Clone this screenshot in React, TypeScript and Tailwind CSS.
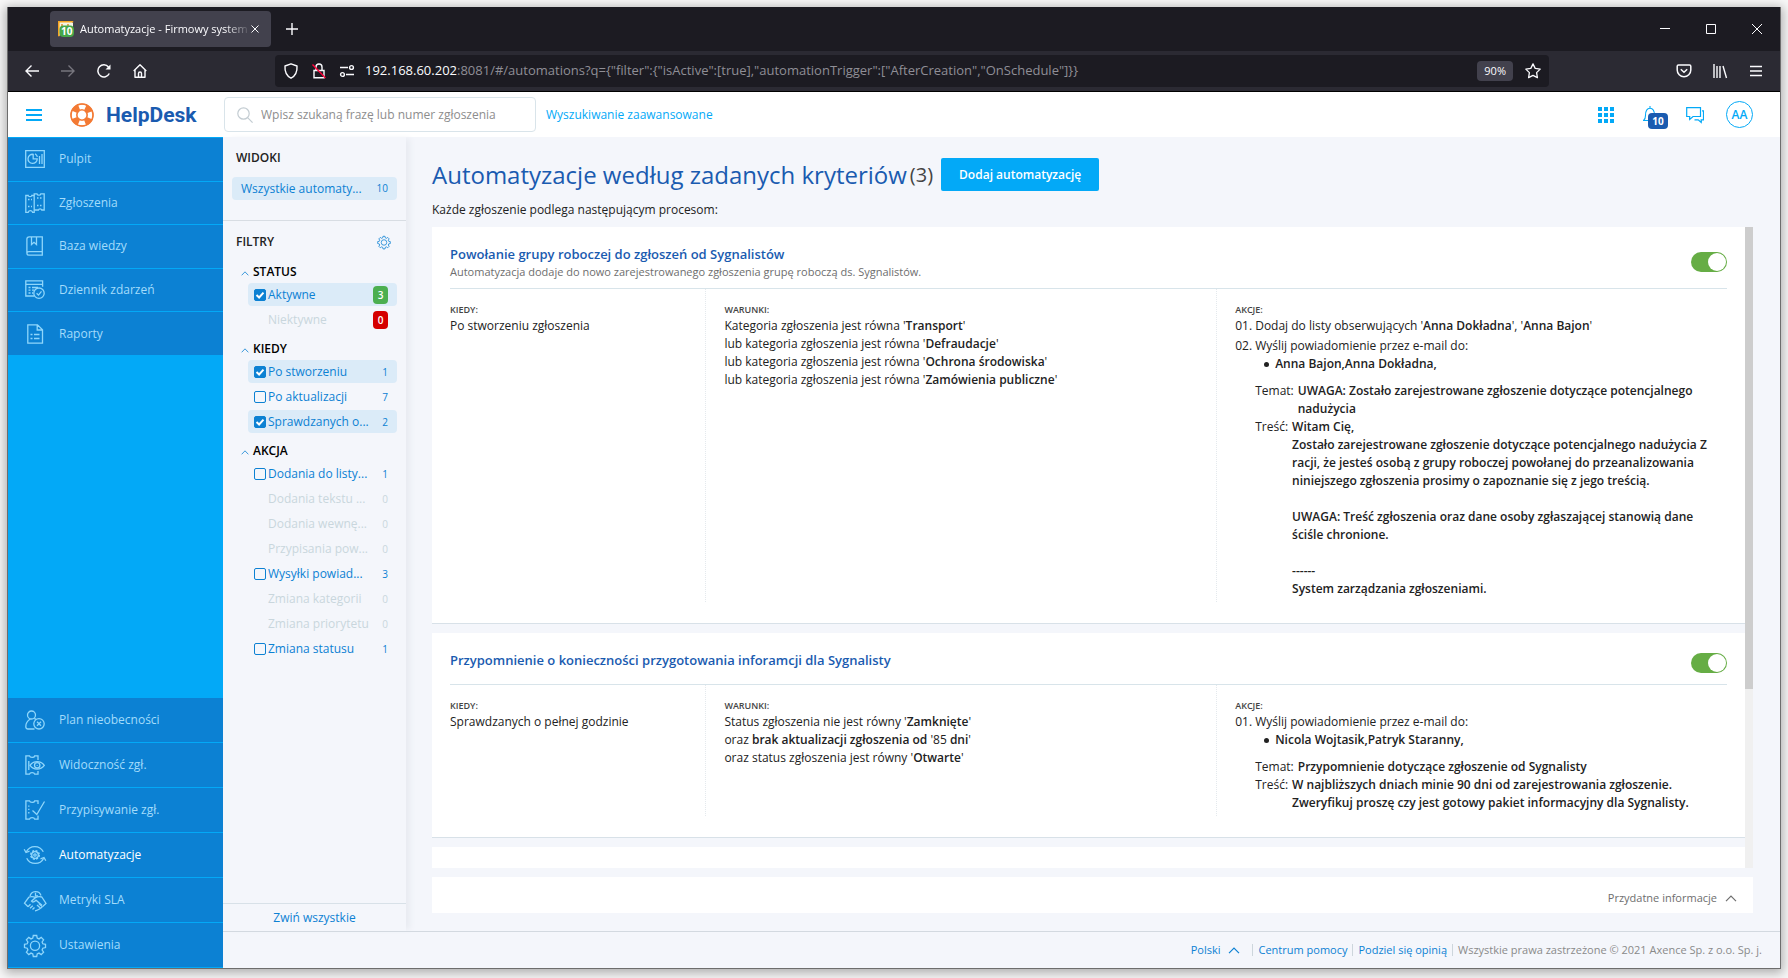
import React from 'react';
import clsx from 'clsx';

/* ---------- icons ---------- */

const iconPaths: Record<string, React.ReactNode> = {
  dashboard: (
    <>
      <path d="M.7 1.7h18.6v16.6H.7z" />
      <path d="M8.2 5.3a4.6 4.6 0 1 0 4 4.6H8.2zM8.2 5v5M10 4.8a4.8 4.8 0 0 1 2.4 3M14.5 7v8M17 5v10" />
    </>
  ),
  tickets: (
    <>
      <path d="M.8 2.5h2.4c.2 1.6 3.4 1.6 3.6 0h2.4v16.8H7.600c-.8-2.200-3.600-2.200-4.400 0H.8V2.500z" />
      <path d="M9.2 2.500V.8H12c.4 1.8 3.400 1.800 3.800 0h3.400V17h-2.400c-.4-1.600-3-1.600-3.400 0H9.200" />
      <path d="M3 6.500h4M3 13.500h4M12 5h4.500M12 12.500h4.500" strokeDasharray="1.500 1.500" />
    </>
  ),
  book: (
    <>
      <path d="M17.300 15.600V.8H4.200C2.600.8 1.900 1.800 1.900 3v14c0 1.400.9 2.200 2.100 2.200h13.300v-2.100M17.300 15.600H4c-1.200 0-2.100.6-2.100 1.500M17.300 15.600v2" />
      <path d="M6.500 1v7.500L9 6.300l2.500 2.200V1" />
    </>
  ),
  log: (
    <>
      <path d="M9.500 16H.8V.8h16.800v6M.8 4.300h16.800M3.500 7.500h2M3.500 10.200h2M3.500 13h2M7 7.500h6M7 10.200h2M7 13h1" />
      <circle cx="14" cy="13.200" r="5.200" />
      <path d="m11.600 13.200 1.900 1.900 3-3.700" />
    </>
  ),
  report: (
    <path d="M2.800.8h9.700l5 5v13.400H2.800zM12.200.8V6h5.300M5.500 10.500h2M9 10.500h5.500M5.500 14.500h2M9 14.500h5.500" />
  ),
  absence: (
    <>
      <circle cx="6.500" cy="5" r="4" />
      <path d="M9.500 19H3C1.500 19 .8 18 .8 16.500c0-3.500 2-6 4.700-7.500M9.300 8.400l1.700 1" />
      <circle cx="14" cy="13.800" r="5.200" />
      <path d="m12 11.800 4 4M16 11.800l-4 4" />
    </>
  ),
  visibility: (
    <>
      <path d="M13 5V.8H9.700C9.300 3 5 3 4.500.8H.9v18.400h3.600c.5-2.200 4.700-2.200 5.200 0H13V16M3.800 6v9" strokeDasharray="none" />
      <path d="M5 10.300c3.500-5 10.700-5 14.300 0-3.600 5-10.800 5-14.300 0z" fill="#0c81d3" />
      <circle cx="12.200" cy="10.300" r="2.700" />
      <path d="M12.200 9.900v.8" />
    </>
  ),
  assign: (
    <>
      <path d="M13 4V.8H9.700C9.300 3 5 3 4.500.8H.9v18.400h3.600c.5-2.200 4.700-2.200 5.200 0H13v-3.700" />
      <path d="M3.800 5.500v9.500" strokeDasharray="1.300 2" />
      <path d="m7.500 10.500 4.300 4L19.500 1.500" />
    </>
  ),
  automation: (
    <>
      <path d="M1.300 6.800a9.500 9.500 0 0 1 17 0M18.700 13.200a9.500 9.500 0 0 1-17 0" />
      <path d="m-.8 4.200 1.800 3.300 3.500-1.300M20.800 15.800 19 12.500l-3.500 1.300" />
      <circle cx="10" cy="10" r="4" strokeWidth="2" strokeDasharray="1.900 1.240" />
      <circle cx="10" cy="10" r="3.300" />
      <circle cx="10" cy="10" r="1.200" />
    </>
  ),
  sla: (
    <>
      <path d="M5 6.200A5.700 5.700 0 0 1 16 5.500M10.500 2.800V6H13" />
      <path d="M4 7-.5 13.200l3.600 3.600M4 7c2.500-.8 4.500-.6 6.500.6l-4 3.600c1 1.500 2.800.6 4.500-1l6 5M10.500 7.600c2-1 4-1.200 6.300-.6L21 13.500l-3.600 3.200" />
      <path d="m3 16.800 2.500-2.500M5 18.300l2.800-2.600M7.500 19.500l2-2M10 20.800c1.800-.1 6.500-2.600 7.400-4.300M12 15l3.300 3M13.800 13.500l3 2.800" />
    </>
  ),
  settings: (
    <>
      <path d="M8.300.5h3.400l.5 2.600 1.800.8L16.200 2.400l2.400 2.400-1.500 2.200.7 1.800 2.700.5v3.300l-2.700.6-.7 1.800 1.500 2.200-2.400 2.400-2.200-1.500-1.800.8-.5 2.600H8.300l-.5-2.600-1.800-.8-2.200 1.500-2.400-2.400 1.500-2.200-.7-1.800-2.700-.6V9.300l2.700-.5L2.900 7 1.400 4.800l2.400-2.400L6 3.900l1.800-.8z" />
      <circle cx="10" cy="10.800" r="4.600" />
    </>
  ),
};

function Icon({ name, className }: { name: string; className?: string }) {
  return (
    <svg viewBox="0 0 20 20" fill="none" stroke="currentColor" strokeWidth="1.300" className={clsx('overflow-visible', className)} aria-hidden="true">
      {iconPaths[name]}
    </svg>
  );
}

function Chevron({ className }: { className?: string }) {
  return (
    <svg viewBox="0 0 12 7" fill="none" stroke="currentColor" strokeWidth="1.200" className={className} aria-hidden="true">
      <path d="M1 6.200 6 1l5 5.200" />
    </svg>
  );
}

/* ---------- browser chrome ---------- */

function TabBar() {
  return (
    <div className="flex h-11 items-center bg-[#1c1b22] pl-[42px] text-[#fbfbfe]">
      <div className="flex h-9 w-[221px] items-center rounded bg-[#42414d] pl-2 pr-3">
        <svg viewBox="0 0 16 16" className="size-4 shrink-0" aria-hidden="true">
          <path d="M.8 15.200V.8h14.400" fill="#fff7e0" stroke="#f5a623" strokeWidth="1.600" />
          <path d="M2 2h13v8H2z" fill="#f3f3e6" />
          <path d="M4 3v5M10 3v3" stroke="#e08a2e" strokeWidth="1.500" />
          <rect x="1.500" y="4.500" width="14.500" height="11.500" rx="4" fill="#46a749" />
          <text x="8.800" y="14" textAnchor="middle" fontSize="10" fontWeight="700" fill="#fff" fontFamily="Open Sans">10</text>
        </svg>
        <div className="ml-[6px] flex-1 overflow-hidden whitespace-nowrap text-[11px] [mask-image:linear-gradient(to_right,black_85%,transparent)]">
          Automatyzacje - Firmowy system
        </div>
        <button aria-label="Zamknij kartę">
          <svg viewBox="0 0 8 8" className="size-2" stroke="currentColor" strokeWidth="1"><path d="m.5.5 7 7M7.500.5l-7 7" /></svg>
        </button>
      </div>
      <button aria-label="Nowa karta" className="ml-[15px]">
        <svg viewBox="0 0 12 12" className="size-3" stroke="currentColor" strokeWidth="1.400"><path d="M6 0v12M0 6h12" /></svg>
      </button>
      <div className="ml-auto flex gap-9 pr-[18px]">
        <button aria-label="Minimalizuj">
          <svg viewBox="0 0 10 10" className="size-[10px]" stroke="currentColor"><path d="M0 4.500h10" /></svg>
        </button>
        <button aria-label="Maksymalizuj">
          <svg viewBox="0 0 10 10" className="size-[10px]" stroke="currentColor" fill="none"><path d="M.5.5h9v9h-9z" /></svg>
        </button>
        <button aria-label="Zamknij">
          <svg viewBox="0 0 10 10" className="size-[10px]" stroke="currentColor"><path d="m0 0 10 10M10 0 0 10" /></svg>
        </button>
      </div>
    </div>
  );
}

function NavBar() {
  return (
    <div className="flex h-[41px] items-center border-b border-black bg-[#2b2a33] text-[#fbfbfe]">
      <div className="flex w-[267px] items-center gap-[22px] pl-[17px]">
        <button aria-label="Wstecz">
          <svg viewBox="0 0 14 14" className="size-[14px]" stroke="currentColor" strokeWidth="1.400" fill="none"><path d="M14 7H1M6.500 1.500 1 7l5.500 5.500" /></svg>
        </button>
        <button aria-label="Dalej" className="text-[#77767e]">
          <svg viewBox="0 0 14 14" className="size-[14px]" stroke="currentColor" strokeWidth="1.400" fill="none"><path d="M0 7h13M7.500 1.500 13 7l-5.500 5.500" /></svg>
        </button>
        <button aria-label="Odśwież">
          <svg viewBox="0 0 14 14" className="size-[14px]" stroke="currentColor" strokeWidth="1.500" fill="none">
            <path d="M12.300 9.500A6 6 0 1 1 11.500 3" />
            <path d="M13.500.5v5H8.500z" fill="currentColor" stroke="none" />
          </svg>
        </button>
        <button aria-label="Strona startowa">
          <svg viewBox="0 0 14 14" className="size-[14px]" stroke="currentColor" strokeWidth="1.400" fill="none" strokeLinejoin="round">
            <path d="M.7 7 7 .8 13.300 7M2 6v7.300h10V6M5.500 13V9.500a1.500 1.500 0 0 1 3 0V13" />
          </svg>
        </button>
      </div>
      <div className="flex h-8 flex-1 items-center rounded bg-[#1c1b22] px-2">
        <svg viewBox="0 0 16 16" className="size-4" stroke="currentColor" strokeWidth="1.400" fill="none" aria-hidden="true">
          <path d="M8 .8 14 3c.4 5.500-1.500 9.800-6 12.200C3.500 12.800 1.600 8.500 2 3z" strokeLinejoin="round" />
        </svg>
        <svg viewBox="0 0 16 16" className="ml-3 size-4" stroke="currentColor" strokeWidth="1.400" fill="none" aria-hidden="true">
          <path d="M3 7.500h10v7.300H3zM5 7.500V4a3 3 0 0 1 6 0v3.500" />
          <path d="m1.500 1.500 13 13.500" stroke="#ff0039" />
        </svg>
        <svg viewBox="0 0 16 16" className="ml-3 size-4" stroke="currentColor" strokeWidth="1.400" fill="none" aria-hidden="true">
          <path d="M1 4.500h8M7 11.500h8" />
          <circle cx="12.500" cy="4.500" r="1.900" />
          <circle cx="3.500" cy="11.500" r="1.900" />
        </svg>
        <div className="ml-[10px] flex-1 overflow-hidden whitespace-nowrap text-[13px] text-[#8f8e96]">
          <span className="text-[#fbfbfe]">192.168.60.202</span>
          {':8081/#/automations?q={"filter":{"isActive":[true],"automationTrigger":["AfterCreation","OnSchedule"]}}'}
        </div>
        <button className="h-5 rounded-sm bg-[#42414d] px-[7px] text-[11px]">90%</button>
        <button aria-label="Dodaj zakładkę" className="ml-3">
          <svg viewBox="0 0 16 16" className="size-4" stroke="currentColor" strokeWidth="1.300" fill="none" strokeLinejoin="round">
            <path d="m8 .9 2.200 4.500 5 .7-3.600 3.500.8 5L8 12.300l-4.400 2.300.8-5L.8 6.100l5-.7z" />
          </svg>
        </button>
      </div>
      <div className="flex items-center gap-5 pl-[127px] pr-[18px]">
        <button aria-label="Pocket">
          <svg viewBox="0 0 16 16" className="size-4" stroke="currentColor" strokeWidth="1.500" fill="none">
            <path d="M2.500 2h11c.8 0 1.300.5 1.300 1.300V7A6.800 6.800 0 0 1 1.200 7V3.300C1.200 2.500 1.700 2 2.500 2z" />
            <path d="m4.800 6.200 3.200 3 3.200-3" />
          </svg>
        </button>
        <button aria-label="Biblioteka">
          <svg viewBox="0 0 16 16" className="size-4" stroke="currentColor" strokeWidth="1.400" fill="none"><path d="M2 1v14M5 3v12M8 3v12M11 3l3.500 12" /></svg>
        </button>
        <button aria-label="Menu" className="pl-[2px]">
          <svg viewBox="0 0 12 12" className="size-3" stroke="currentColor" strokeWidth="1.300"><path d="M0 1.500h12M0 6h12M0 10.500h12" /></svg>
        </button>
      </div>
    </div>
  );
}

/* ---------- application ---------- */

function AppHeader() {
  return (
    <header className="flex h-[45px] items-center bg-white">
      <button aria-label="Menu" className="ml-[18px] flex w-4 flex-col gap-[3px]">
        <span className="h-[2px] bg-[#03a9f7]" />
        <span className="h-[2px] bg-[#03a9f7]" />
        <span className="h-[2px] bg-[#03a9f7]" />
      </button>
      <a href="#" className="ml-7 flex w-[154px] items-center gap-3">
        <svg viewBox="0 0 24 24" className="size-6" aria-hidden="true">
          <circle cx="12" cy="12" r="8.200" fill="none" stroke="#f37a34" strokeWidth="6.500" />
          <circle cx="12" cy="12" r="8" fill="none" stroke="#fff" strokeWidth="4.400" strokeDasharray="6.280 6.280" strokeDashoffset="3.140" />
          <circle cx="12" cy="12" r="11.200" fill="none" stroke="#f37a34" strokeWidth="1.200" />
          <circle cx="12" cy="12" r="5" fill="none" stroke="#f37a34" strokeWidth="1.200" />
        </svg>
        <span className="font-['Roboto'] text-[21px] leading-6 font-bold text-[#1a5bb0]">HelpDesk</span>
      </a>
      <label className="flex h-[35px] w-[312px] items-center rounded-sm border border-[#d9e4ea] pl-3">
        <svg viewBox="0 0 16 16" className="size-4" fill="none" stroke="#c3ccd2" strokeWidth="1.200" aria-hidden="true">
          <circle cx="6.500" cy="6.500" r="5.700" />
          <path d="m10.600 10.600 5 5" />
        </svg>
        <input
          aria-label="Szukaj"
          placeholder="Wpisz szukaną frazę lub numer zgłoszenia"
          className="ml-2 flex-1 text-xs text-gray-800 outline-none placeholder:text-[#8d8d8d]"
        />
      </label>
      <a href="#" className="ml-[10px] text-xs text-[#03a9f7]">Wyszukiwanie zaawansowane</a>
      <div className="ml-auto flex items-center pr-[27px] text-[#03a9f7]">
        <button aria-label="Aplikacje" className="grid grid-cols-3 gap-[2px]">
          {Array.from({ length: 9 }, (_, i) => (
            <span key={i} className="size-1 bg-[#03a9f7]" />
          ))}
        </button>
        <button aria-label="Powiadomienia" className="relative ml-[29px] w-[25px]">
          <svg viewBox="0 0 14 18" className="h-[18px] w-[14px]" fill="none" stroke="currentColor" strokeWidth="1.100">
            <path d="M7 0v2M.5 14.500c1.500-1 2-2.500 2-5C2.500 5 4 2.200 7 2.200s4.500 2.800 4.500 7.300c0 2.500.5 4 2 5zM5.500 15a1.500 1.500 0 0 0 3 0" />
          </svg>
          <span className="absolute top-[7px] left-[5px] w-5 rounded-sm bg-[#1a5bb0] text-center text-[10px] leading-4 font-bold text-white">10</span>
        </button>
        <button aria-label="Wiadomości" className="ml-[18px]">
          <svg viewBox="0 0 18 18" className="size-[18px]" fill="none" stroke="currentColor" strokeWidth="1.200">
            <path d="M.7 1.700h13.800v8.800H7l-3.300 3v-3h-3zM16 4.800h1.500v9h-2.300v2.700l-3-2.700H8.500" />
          </svg>
        </button>
        <button className="ml-[22px] flex size-[27px] items-center justify-center rounded-full border border-[#03a9f7] text-xs font-semibold">AA</button>
      </div>
    </header>
  );
}

const topMenu = [
  { icon: 'dashboard', label: 'Pulpit' },
  { icon: 'tickets', label: 'Zgłoszenia' },
  { icon: 'book', label: 'Baza wiedzy' },
  { icon: 'log', label: 'Dziennik zdarzeń' },
  { icon: 'report', label: 'Raporty' },
];

const bottomMenu = [
  { icon: 'absence', label: 'Plan nieobecności' },
  { icon: 'visibility', label: 'Widoczność zgł.' },
  { icon: 'assign', label: 'Przypisywanie zgł.' },
  { icon: 'automation', label: 'Automatyzacje', active: true },
  { icon: 'sla', label: 'Metryki SLA' },
  { icon: 'settings', label: 'Ustawienia' },
];

function MenuItem({ icon, label, active, className }: { icon: string; label: string; active?: boolean; className: string }) {
  return (
    <a href="#" className={clsx('flex items-center gap-[14px] border-b border-[#03a9f7] bg-[#0c81d3] pl-[17px] text-xs', className, active ? 'text-white' : 'text-[#a3dcfb]')}>
      <Icon name={icon} className="size-5 text-[#8fd6fb]" />
      {label}
    </a>
  );
}

function Sidebar() {
  return (
    <nav className="flex w-[215px] shrink-0 flex-col justify-between bg-[#03a9f7]">
      <div className="flex h-[219px] flex-col border-t border-[#03a9f7]">
        {topMenu.map((item) => (
          <MenuItem key={item.label} {...item} className="flex-1" />
        ))}
      </div>
      <div>
        {bottomMenu.map((item) => (
          <MenuItem key={item.label} {...item} className="h-[45px]" />
        ))}
      </div>
    </nav>
  );
}

interface FilterOption {
  label: string;
  count: number;
  checked?: boolean;
  disabled?: boolean;
  badge?: 'green' | 'red';
}

const filterGroups: { title: string; options: FilterOption[] }[] = [
  {
    title: 'STATUS',
    options: [
      { label: 'Aktywne', count: 3, checked: true, badge: 'green' },
      { label: 'Niektywne', count: 0, disabled: true, badge: 'red' },
    ],
  },
  {
    title: 'KIEDY',
    options: [
      { label: 'Po stworzeniu', count: 1, checked: true },
      { label: 'Po aktualizacji', count: 7 },
      { label: 'Sprawdzanych o...', count: 2, checked: true },
    ],
  },
  {
    title: 'AKCJA',
    options: [
      { label: 'Dodania do listy...', count: 1 },
      { label: 'Dodania tekstu ...', count: 0, disabled: true },
      { label: 'Dodania wewnę...', count: 0, disabled: true },
      { label: 'Przypisania pow...', count: 0, disabled: true },
      { label: 'Wysyłki powiad...', count: 3 },
      { label: 'Zmiana kategorii', count: 0, disabled: true },
      { label: 'Zmiana priorytetu', count: 0, disabled: true },
      { label: 'Zmiana statusu', count: 1 },
    ],
  },
];

function FilterRow({ label, count, checked, disabled, badge }: FilterOption) {
  return (
    <label
      className={clsx(
        'flex h-[23px] items-center rounded-sm pr-[9px] pl-[6px] text-xs',
        checked && 'bg-[#dbebf8]',
        disabled ? 'text-[#c9d6dd]' : 'text-[#0c81d3]'
      )}
    >
      {disabled ? (
        <span className="w-[14px]" />
      ) : (
        <span className="relative mr-[2px] size-3">
          <input
            type="checkbox"
            defaultChecked={checked}
            className="block size-3 appearance-none rounded-xs border border-[#0c81d3] checked:bg-[#0c81d3]"
          />
          {checked && (
            <svg viewBox="0 0 11 11" className="pointer-events-none absolute inset-0 size-3" fill="none" stroke="#fff" strokeWidth="1.800" aria-hidden="true">
              <path d="m2.300 5.500 2.400 2.300 4-4.400" />
            </svg>
          )}
        </span>
      )}
      <span className="flex-1 whitespace-nowrap">{label}</span>
      <span
        className={clsx(
          'text-[10px] leading-[18px]',
          badge ? 'w-[15px] rounded-sm text-center font-semibold text-white' : '',
          badge === 'green' && 'bg-[#4caf50]',
          badge === 'red' && 'bg-[#d50000]'
        )}
      >
        {count}
      </span>
    </label>
  );
}

function FilterPanel() {
  return (
    <aside className="flex w-[183px] shrink-0 flex-col bg-[#f4f6fb] shadow-[6px_0_6px_-2px_#e8ebf1]">
      <section className="border-b border-[#d8dde3] px-[9px] pt-[11px] pb-5">
        <h2 className="pl-1 text-xs leading-5 font-semibold text-[#222]">WIDOKI</h2>
        <a href="#" className="mt-[9px] flex h-[23px] items-center justify-between rounded-sm bg-[#dbebf8] px-[9px] text-xs text-[#0c81d3]">
          Wszystkie automaty...
          <span className="text-[10px]">10</span>
        </a>
      </section>
      <section className="flex-1 px-[9px] pt-[11px]">
        <div className="mb-[10px] flex items-center justify-between pr-[7px] pl-1">
          <h2 className="text-xs leading-5 font-semibold text-[#222]">FILTRY</h2>
          <button aria-label="Ustawienia filtrów" className="text-[#0c81d3]">
            <Icon name="settings" className="size-3" />
          </button>
        </div>
        {filterGroups.map((group) => (
          <div key={group.title} className="mb-2">
            <button className="flex items-center gap-1 pl-[9px] text-xs leading-5 font-semibold text-black">
              <Chevron className="mt-[2px] h-[5px] w-2 text-[#0c81d3]" />
              {group.title}
            </button>
            <div className="mt-px ml-4 flex flex-col gap-[2px]">
              {group.options.map((option) => (
                <FilterRow key={option.label} {...option} />
              ))}
            </div>
          </div>
        ))}
      </section>
      <button className="h-7 border-t border-[#d8e1e8] text-xs text-[#0c81d3]">Zwiń wszystkie</button>
    </aside>
  );
}

function B({ children }: { children: React.ReactNode }) {
  return <b className="font-semibold">{children}</b>;
}

function Column({ title, children }: { title: string; children: React.ReactNode }) {
  return (
    <div className="border-l border-dotted border-[#e4e9ed] pt-[14px] pr-2 pb-1 pl-[18px] first:border-none first:pl-0">
      <h4 className="text-[9px] leading-[14px] font-semibold text-[#444]">{title}</h4>
      {children}
    </div>
  );
}

interface MailAction {
  recipients: string;
  subject: string;
  body: React.ReactNode;
}

function Mail({ no, mail }: { no: string; mail: MailAction }) {
  return (
    <div className="flex">
      <span className="w-5 shrink-0">{no}</span>
      <div>
        Wyślij powiadomienie przez e-mail do:
        <ul className="pl-[9px]">
          <li className="flex items-center gap-[6px]">
            <span className="size-[5px] rounded-full bg-[#222]" />
            <B>{mail.recipients}</B>
          </li>
        </ul>
        <div className="mt-[9px] flex gap-1">
          <span>Temat:</span>
          <B>{mail.subject}</B>
        </div>
        <div className="flex gap-1">
          <span>Treść:</span>
          <B>{mail.body}</B>
        </div>
      </div>
    </div>
  );
}

interface CardProps {
  title: string;
  description?: string;
  when: string;
  conditions: React.ReactNode;
  actions: React.ReactNode;
}

function AutomationCard({ title, description, when, conditions, actions }: CardProps) {
  return (
    <article className="shrink-0 border-b border-[#d8e1e8] bg-white px-[18px] pb-[21px]">
      <div className="flex min-h-[52px] items-center justify-between border-b border-[#d8e4ea] pt-[17px] pb-2">
        <div className="self-start">
          <h3 className="text-[13px] leading-5 font-semibold text-[#1a5bb0]">{title}</h3>
          {description && <p className="text-[11px] leading-4 text-[#6e6e6e]">{description}</p>}
        </div>
        <input
          type="checkbox"
          role="switch"
          aria-label={title}
          defaultChecked
          className="flex h-5 w-9 appearance-none items-center justify-end rounded-full bg-[#66ad45] px-px before:size-[18px] before:rounded-full before:bg-white"
        />
      </div>
      <div className="grid grid-cols-[1fr_2fr_2fr] text-xs leading-[18px] text-[#222]">
        <Column title="KIEDY:">{when}</Column>
        <Column title="WARUNKI:">{conditions}</Column>
        <Column title="AKCJE:">{actions}</Column>
      </div>
    </article>
  );
}

function AutomationList() {
  return (
    <div className="flex min-h-0 flex-1">
      <div className="flex flex-1 flex-col gap-[9px] overflow-hidden">
        <AutomationCard
          title="Powołanie grupy roboczej do zgłoszeń od Sygnalistów"
          description="Automatyzacja dodaje do nowo zarejestrowanego zgłoszenia grupę roboczą ds. Sygnalistów."
          when="Po stworzeniu zgłoszenia"
          conditions={
            <>
              Kategoria zgłoszenia jest równa '<B>Transport</B>'<br />
              lub kategoria zgłoszenia jest równa '<B>Defraudacje</B>'<br />
              lub kategoria zgłoszenia jest równa '<B>Ochrona środowiska</B>'<br />
              lub kategoria zgłoszenia jest równa '<B>Zamówienia publiczne</B>'
            </>
          }
          actions={
            <>
              <div className="mb-[2px] flex">
                <span className="w-5 shrink-0">01.</span>
                <span>Dodaj do listy obserwujących '<B>Anna Dokładna</B>', '<B>Anna Bajon</B>'</span>
              </div>
              <Mail
                no="02."
                mail={{
                  recipients: 'Anna Bajon,Anna Dokładna,',
                  subject: 'UWAGA: Zostało zarejestrowane zgłoszenie dotyczące potencjalnego nadużycia',
                  body: (
                    <>
                      Witam Cię,<br />
                      Zostało zarejestrowane zgłoszenie dotyczące potencjalnego nadużycia Z racji, że jesteś osobą z grupy roboczej powołanej do przeanalizowania niniejszego zgłoszenia prosimy o zapoznanie się z jego treścią.<br />
                      <br />
                      UWAGA: Treść zgłoszenia oraz dane osoby zgłaszającej stanowią dane ściśle chronione.<br />
                      <br />
                      ------<br />
                      System zarządzania zgłoszeniami.
                    </>
                  ),
                }}
              />
            </>
          }
        />
        <AutomationCard
          title="Przypomnienie o konieczności przygotowania inforamcji dla Sygnalisty"
          when="Sprawdzanych o pełnej godzinie"
          conditions={
            <>
              Status zgłoszenia nie jest równy '<B>Zamknięte</B>'<br />
              oraz <B>brak aktualizacji zgłoszenia od</B> '85 <B>dni</B>'<br />
              oraz status zgłoszenia jest równy '<B>Otwarte</B>'
            </>
          }
          actions={
            <Mail
              no="01."
              mail={{
                recipients: 'Nicola Wojtasik,Patryk Staranny,',
                subject: 'Przypomnienie dotyczące zgłoszenie od Sygnalisty',
                body: (
                  <>
                    W najbliższych dniach minie 90 dni od zarejestrowania zgłoszenie.<br />
                    Zweryfikuj proszę czy jest gotowy pakiet informacyjny dla Sygnalisty.
                  </>
                ),
              }}
            />
          }
        />
        <article className="min-h-40 bg-white" />
      </div>
      <div className="w-2 bg-[#f0f0f0]">
        <div className="h-[72%] bg-[#cdcdcd]" />
      </div>
    </div>
  );
}

function Footer() {
  return (
    <footer className="flex h-[37px] items-center justify-end border-t border-[#d3d9e0] pr-[18px] text-[11px] text-[#8a8a8a]">
      <button className="flex items-center gap-2 pr-3 text-[#0c81d3]">
        Polski
        <Chevron className="h-[7px] w-3" />
      </button>
      <a href="#" className="border-l border-[#cdd6dc] px-[5px] leading-3 text-[#0c81d3]">Centrum pomocy</a>
      <a href="#" className="border-l border-[#cdd6dc] px-[5px] leading-3 text-[#0c81d3]">Podziel się opinią</a>
      <span className="border-l border-[#cdd6dc] pl-[5px] leading-3">Wszystkie prawa zastrzeżone © 2021 Axence Sp. z o.o. Sp. j.</span>
    </footer>
  );
}

export default function App() {
  return (
    <div className="flex h-screen flex-col bg-[#f8f8f8] px-[7px] pt-[7px] pb-[9px] font-['Open_Sans',sans-serif]">
      <div className="flex min-h-0 flex-1 flex-col border-x border-b border-[#6d6d6d] shadow-[0_2px_10px_2px_rgba(0,0,0,0.3)]">
        <TabBar />
        <NavBar />
        <AppHeader />
        <div className="flex min-h-0 flex-1 bg-[#f4f6fb]">
          <Sidebar />
          <div className="flex min-w-0 flex-1 flex-col">
            <div className="flex min-h-0 flex-1">
              <FilterPanel />
              <main className="flex min-w-0 flex-1 flex-col pt-[21px] pr-[27px] pb-[18px] pl-[26px]">
                <div className="flex items-center">
                  <h1 className="text-2xl leading-8 text-[#1a5bb0]">Automatyzacje według zadanych kryteriów</h1>
                  <span className="ml-[3px] text-xl leading-8 text-[#444]">(3)</span>
                  <button className="ml-2 h-[33px] rounded-xs bg-[#03a9f7] px-[18px] text-xs font-semibold text-white">Dodaj automatyzację</button>
                </div>
                <p className="mt-[10px] mb-2 text-xs leading-[18px] text-[#222]">Każde zgłoszenie podlega następującym procesom:</p>
                <AutomationList />
                <button className="mt-[9px] flex h-9 shrink-0 items-center justify-end gap-2 bg-white pt-[6px] pr-4 text-[11px] text-[#6e6e6e]">
                  Przydatne informacje
                  <Chevron className="h-[7px] w-3" />
                </button>
              </main>
            </div>
            <Footer />
          </div>
        </div>
      </div>
    </div>
  );
}
